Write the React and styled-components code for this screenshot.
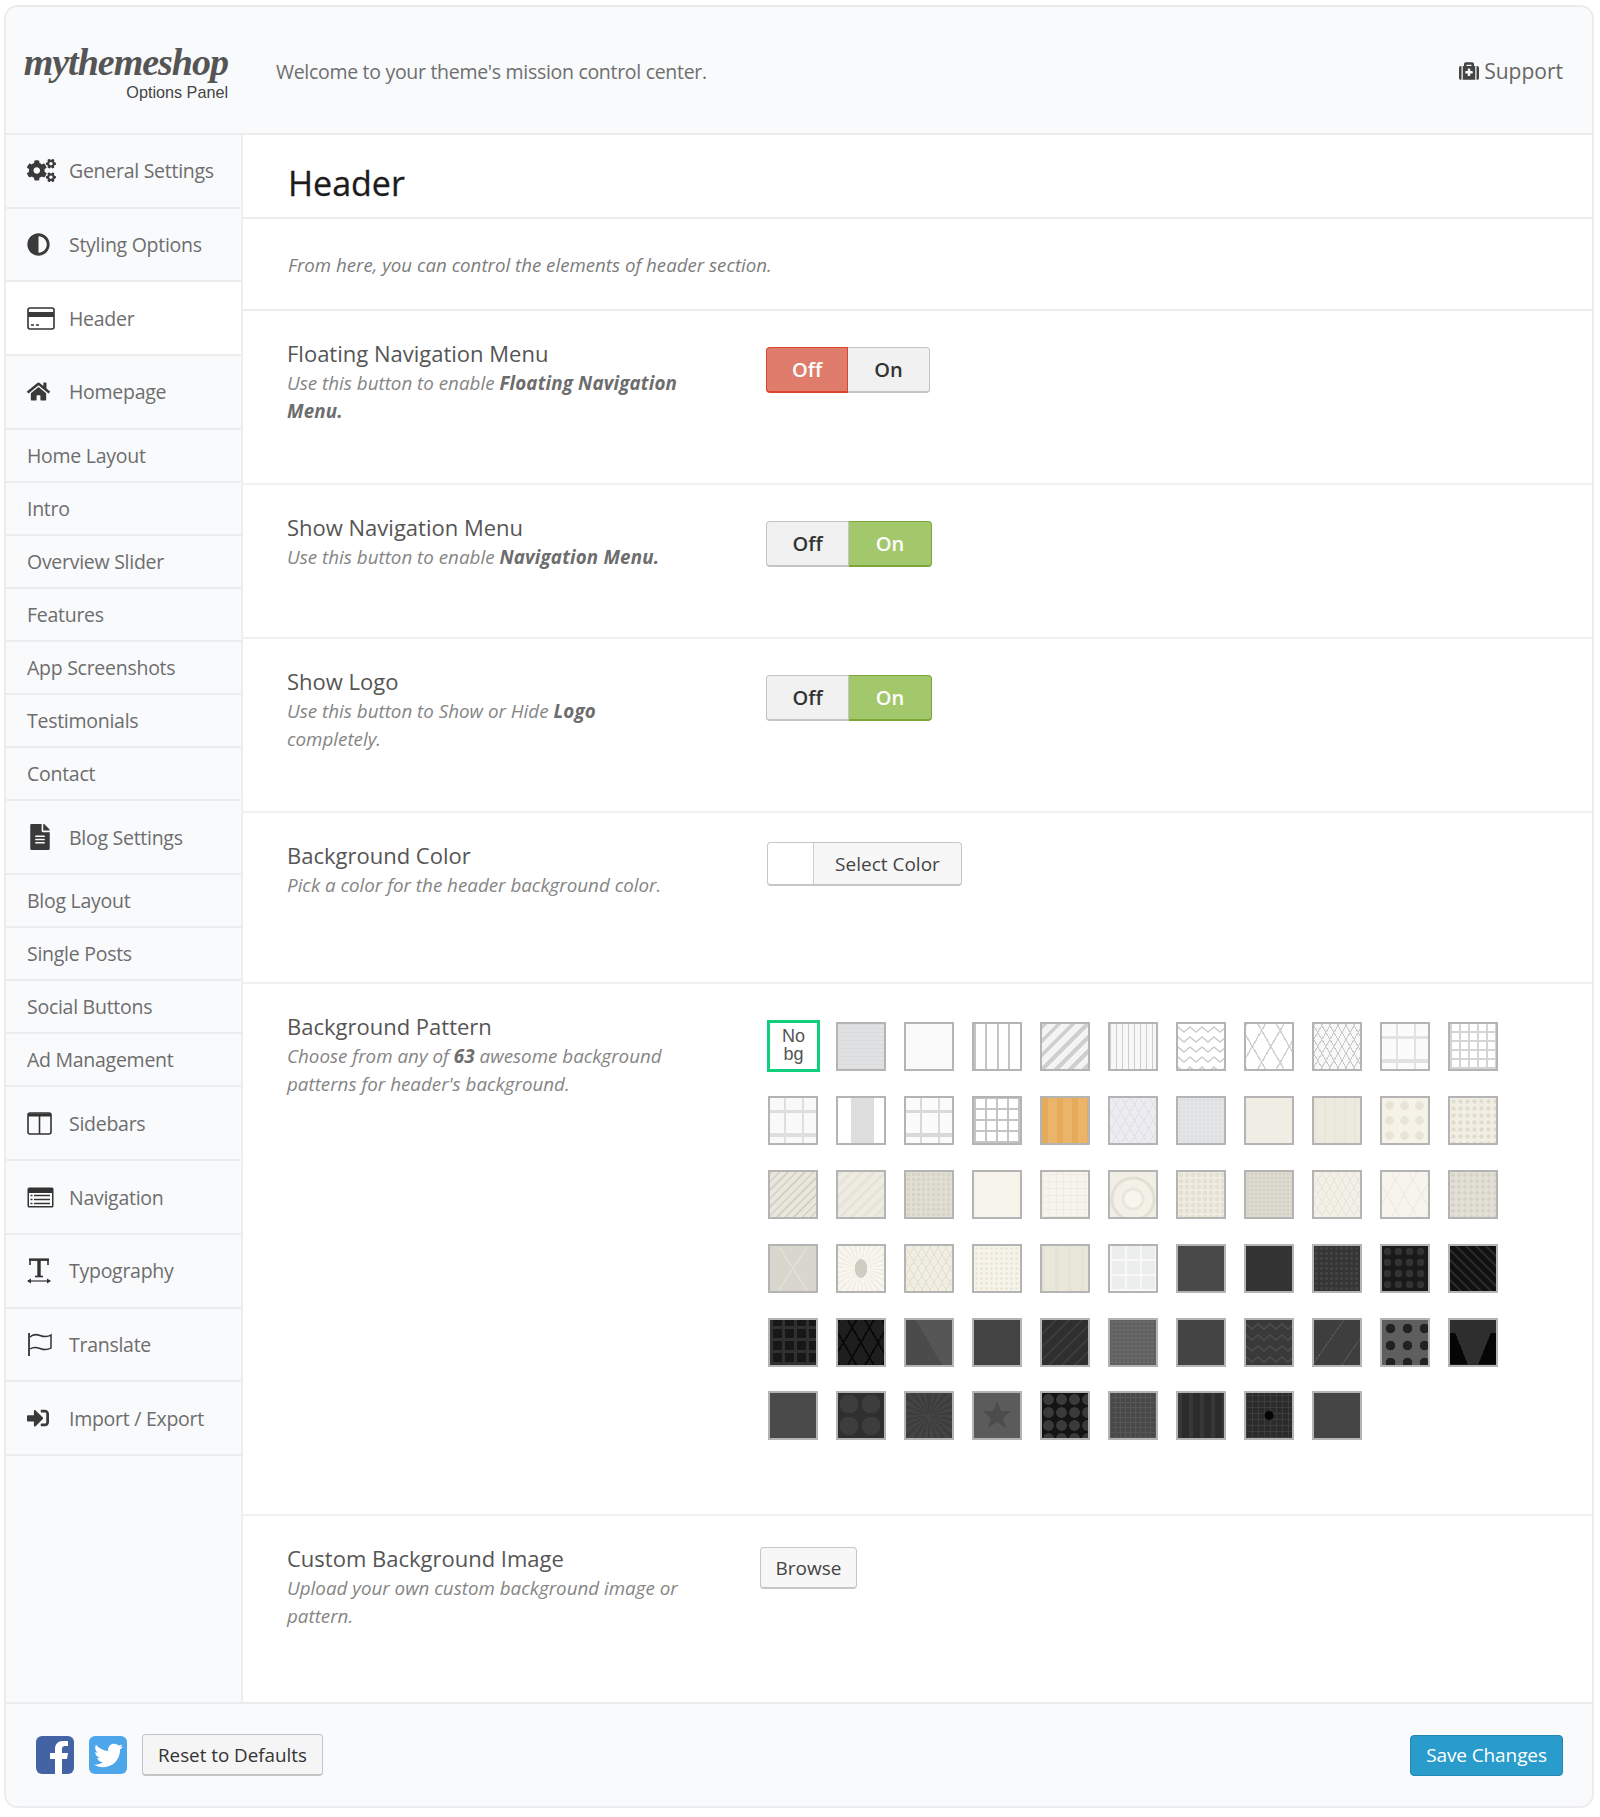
import React from "react"
import styled, { createGlobalStyle, css } from "styled-components"
import { FaCogs, FaAdjust, FaHome, FaFileAlt, FaSignInAlt, FaMedkit, FaTwitter } from "react-icons/fa"

const CardIcon = () => (
  <svg width="28" height="23" viewBox="0 0 28 23">
    <rect x="1" y="1" width="26" height="21" rx="2" fill="#fff" stroke="#333" strokeWidth="1.6" />
    <rect x="1" y="5" width="26" height="5" fill="#3a3a3a" />
    <path d="M4 18h3M9 18h3" stroke="#333" strokeWidth="1.5" />
  </svg>
)

const ColumnsIcon = () => (
  <svg width="25" height="23" viewBox="0 0 25 23">
    <rect x="1" y="1" width="23" height="21" rx="2" fill="none" stroke="#333" strokeWidth="1.6" />
    <path d="M1 3h23" stroke="#333" strokeWidth="3" />
    <path d="M12.5 2v20" stroke="#333" strokeWidth="1.6" />
  </svg>
)

const ListIcon = () => (
  <svg width="27" height="21" viewBox="0 0 27 21">
    <rect x="0.5" y="0.5" width="26" height="20" rx="1.5" fill="#333" />
    <rect x="2" y="6" width="23" height="13" fill="#fff" />
    <path d="M7 8.5h16M7 12.5h16M7 16.500h16" stroke="#333" strokeWidth="1.6" />
    <path d="M3.500 8.500h2M3.500 12.500h2M3.500 16.500h2" stroke="#333" strokeWidth="1.6" />
  </svg>
)

const TypeIcon = () => (
  <svg width="24" height="26" viewBox="0 0 24 26">
    <path d="M3 7V2h18v5M3 2v5M21 2v5" fill="none" stroke="#333" strokeWidth="1.600" />
    <path d="M2 1.500h20" stroke="#333" strokeWidth="2.200" />
    <path d="M12 2v16" stroke="#333" strokeWidth="3.400" />
    <path d="M8 18.500h8" stroke="#333" strokeWidth="1.600" />
    <path d="M1 23h22" stroke="#333" strokeWidth="1.200" />
    <path d="M0 23l4-2.600v5.200zM24 23l-4-2.600v5.200z" fill="#333" />
  </svg>
)

const FlagIcon = () => (
  <svg width="27" height="24" viewBox="0 0 27 24">
    <path d="M2 1v23" stroke="#333" strokeWidth="1.800" />
    <path d="M3 5c3-3 6-3 10-1.500s8 1.500 11-.5v13c-3 2-7 2-11 .500s-7-1.500-10 .500" fill="none" stroke="#333" strokeWidth="1.500" />
  </svg>
)

const FacebookIcon = () => (
  <svg width="38" height="38" viewBox="0 0 38 38">
    <rect width="38" height="38" rx="6" fill="#4463a5" />
    <path d="M26 38V23h5l1-6h-6v-4c0-2 1-3 3-3h3V5h-5c-5 0-8 3-8 8v4h-5v6h5v15z" fill="#fff" />
  </svg>
)

const Zigzag = ({ color, rows, amp = 5, step = 6 }) => (
  <svg width="46" height="45" viewBox="0 0 46 45">
    {rows.map((y) => {
      let d = `M-2 ${y}`
      for (let x = 0, up = true; x < 56; x += step, up = !up) d += `L${x} ${up ? y - amp : y}`
      return <path key={y} d={d} fill="none" stroke={color} strokeWidth="1.500" />
    })}
  </svg>
)

const StarTile = () => (
  <svg width="46" height="45" viewBox="0 0 46 45">
    <path d="M23 8l4 10h10l-8 7 3 10-9-6-9 6 3-10-8-7h10z" fill="#4c4c4c" />
  </svg>
)

const lines = (bg, c, angle, size, w) =>
  `repeating-linear-gradient(${angle}deg, ${c} 0 ${w}px, transparent ${w}px ${size}px), ${bg}`
const lattice = (bg, c, size, w) =>
  `repeating-linear-gradient(60deg, ${c} 0 ${w}px, transparent ${w}px ${size}px), repeating-linear-gradient(120deg, ${c} 0 ${w}px, transparent ${w}px ${size}px), ${bg}`
const grid = (bg, c, size, w) =>
  `repeating-linear-gradient(0deg, ${c} 0 ${w}px, transparent ${w}px ${size}px), repeating-linear-gradient(90deg, ${c} 0 ${w}px, transparent ${w}px ${size}px), ${bg}`
const dots = (bg, c, size, r) =>
  `radial-gradient(circle, ${c} ${r}px, transparent ${r + 0.6}px) 0 0 / ${size}px ${size}px, ${bg}`
const band = (bg, c, from, to) =>
  `linear-gradient(90deg, transparent ${from}px, ${c} ${from}px ${to}px, transparent ${to}px), ${bg}`
const bars = (bg, c) =>
  `linear-gradient(0deg, transparent 6px, ${c} 6px 10px, transparent 10px 30px, ${c} 30px 33px, transparent 33px), linear-gradient(90deg, transparent 14px, ${c} 14px 16px, transparent 16px 32px, ${c} 32px 34px, transparent 34px), ${bg}`

const swatches = [
  { bg: lines("#e0e1e3", "#d9dadc", 0, 4, 1) },
  { bg: "#fafafa" },
  { bg: lines("#fff", "#c4c4c4", 90, 11.500, 2) },
  { bg: lines("#f4f4f4", "#cfcfcf", 135, 10, 4) },
  { bg: lines("#f7f7f7", "#cdcdcd", 90, 6, 1.500) },
  { bg: "#fff", art: <Zigzag color="#cdcdcd" rows={[8, 18, 28, 38, 48]} /> },
  { bg: lattice("#fff", "#d2d2d2", 16, 1.500) },
  { bg: lattice("#f8f8f8", "#c9c9c9", 7, 1) },
  { bg: bars("#fbfbfb", "#e2e2e2") },
  { bg: grid("#fff", "#d4d4d4", 9, 2) },

  { bg: bars("#f9f9f9", "#dedede") },
  { bg: band("#fff", "#dedede", 13, 36) },
  { bg: bars("#fbfbfb", "#d9d9d9") },
  { bg: grid("#fff", "#c4c4c4", 11, 2) },
  { bg: lines("#eab56b", "rgba(220,150,60,.35)", 90, 15, 6) },
  { bg: lattice("#ececf1", "#e0e0e6", 8, 1) },
  { bg: dots("#e3e4e6", "#dddee0", 4, 1) },
  { bg: "#efede4" },
  { bg: lines("#ece9df", "#e8e5da", 90, 10, 2) },
  { bg: dots("#f5f2e8", "#e8e4d7", 15, 4) },
  { bg: dots("#f1eee4", "#e0dccd", 7, 1.800) },

  { bg: lines("#e9e7dd", "#d4d1c5", 135, 6, 1.500) },
  { bg: lines("#eeece2", "#e6e4d9", 135, 8, 3) },
  { bg: dots("#e1dfd4", "#d6d3c8", 5, 1.500) },
  { bg: "#f5f3ea" },
  { bg: grid("#f6f4ec", "#eeebe1", 7, 1) },
  { bg: "radial-gradient(circle at 50% 60%, #f7f5ec 0 8px, #e9e6dc 9px 11px, #f3f1e7 12px 19px, #e2dfd4 20px 22px, #f1efe5 23px)" },
  { bg: dots("#eeebe0", "#e3dfd2", 6, 2) },
  { bg: dots("#dfddd2", "#d4d1c6", 4, 1.200) },
  { bg: lattice("#f3f1e7", "#e8e5da", 7, 1) },
  { bg: lattice("#f6f4ec", "#edebe0", 15, 1) },
  { bg: dots("#e2e0d6", "#d5d2c7", 6, 1.500) },

  { bg: "linear-gradient(57deg, transparent 49%, #e3e1d8 49% 51%, transparent 51%), linear-gradient(123deg, transparent 49%, #e3e1d8 49% 51%, transparent 51%), #d9d7cd" },
  { bg: "radial-gradient(ellipse 6px 9px, #cfcdc2 0 100%, transparent 105%), repeating-conic-gradient(#f9f7ef 0 6deg, #f0eee5 6deg 12deg)" },
  { bg: lattice("#f0eee2", "#e3e0d2", 7, 1) },
  { bg: dots("#f6f3e8", "#e9e5d8", 5, 1) },
  { bg: lines("#e9e6da", "#e4e1d5", 90, 13, 3) },
  { bg: grid("#eceded", "#f8f8f8", 15, 2) },
  { bg: "#494949" },
  { bg: "#333" },
  { bg: dots("#353535", "#444", 5, 1.200) },
  { bg: dots("#1a1a1a", "#333", 11, 3.500) },
  { bg: lines("#111", "#2a2a2a", 45, 7, 2) },

  { bg: grid("#171717", "#303030", 12, 3) },
  { bg: lattice("#1e1e1e", "#0a0a0a", 15, 2) },
  { bg: "linear-gradient(60deg, #4b4b4b 50%, #565656 50%)" },
  { bg: "#434343" },
  { bg: lines("#2f2f2f", "#3b3b3b", 135, 9, 2) },
  { bg: dots("#616161", "#6c6c6c", 4, 1) },
  { bg: "#444" },
  { bg: "#3a3a3a", art: <Zigzag color="#4e4e4e" rows={[9, 20, 31, 42]} /> },
  { bg: lines("#3e3e3e", "#575757", 125, 24, 1) },
  { bg: dots("#5e5e5e", "#222", 17, 4.500) },
  { bg: "linear-gradient(68deg, #050505 50%, transparent 50%) left bottom / 50% 70% no-repeat, linear-gradient(-68deg, #050505 50%, transparent 50%) right bottom / 50% 70% no-repeat, #2e2e2e" },

  { bg: "#4a4a4a" },
  { bg: dots("#2f2f2f", "#3d3d3d", 22, 9) },
  { bg: "repeating-conic-gradient(#3d3d3d 0 8deg, #454545 8deg 16deg)" },
  { bg: "#5b5b5b", art: <StarTile /> },
  { bg: dots("#141414", "#3a3a3a", 13, 5) },
  { bg: grid("#494949", "#565656", 5, 1) },
  { bg: lines("#2c2c2c", "#383838", 90, 11, 4) },
  { bg: "radial-gradient(circle, #050505 0 4px, transparent 5px), " + grid("#2b2b2b", "#3d3d3d", 6, 1) },
  { bg: "#454545" },
]

const menu = [
  { label: "General Settings", icon: <FaCogs size={29} /> },
  { label: "Styling Options", icon: <FaAdjust size={23} /> },
  { label: "Header", icon: <CardIcon />, active: true },
  { label: "Homepage", icon: <FaHome size={23} /> },
  { label: "Home Layout" }, { label: "Intro" }, { label: "Overview Slider" }, { label: "Features" },
  { label: "App Screenshots" }, { label: "Testimonials" }, { label: "Contact" },
  { label: "Blog Settings", icon: <FaFileAlt size={26} /> },
  { label: "Blog Layout" }, { label: "Single Posts" }, { label: "Social Buttons" }, { label: "Ad Management" },
  { label: "Sidebars", icon: <ColumnsIcon /> },
  { label: "Navigation", icon: <ListIcon /> },
  { label: "Typography", icon: <TypeIcon /> },
  { label: "Translate", icon: <FlagIcon /> },
  { label: "Import / Export", icon: <FaSignInAlt size={22} /> },
]

const Toggle = ({ on }) => (
  <ToggleWrap>
    <ToggleSide $wide={on} $tone={on ? null : "off"}>Off</ToggleSide>
    <ToggleSide $wide={on} $tone={on ? "on" : null}>On</ToggleSide>
  </ToggleWrap>
)

const App = () => {
  return (
    <>
      <Global />
      <Panel>
        <Top>
          <Logo>
            <LogoName>mythemeshop</LogoName>
            <LogoSub>Options Panel</LogoSub>
          </Logo>
          <Welcome>Welcome to your theme's mission control center.</Welcome>
          <Support><FaMedkit size={20} />Support</Support>
        </Top>
        <Body>
          <Sidebar>
            {menu.map((m) => (
              <MenuItem key={m.label} $big={!!m.icon} $active={m.active}>
                {m.icon && <MenuIcon>{m.icon}</MenuIcon>}
                {m.label}
              </MenuItem>
            ))}
          </Sidebar>
          <Main>
            <PageTitle>Header</PageTitle>
            <Intro>From here, you can control the elements of header section.</Intro>
            <Row $height={174}>
              <Info>
                <Label>Floating Navigation Menu</Label>
                <Desc>Use this button to enable <b>Floating Navigation Menu.</b></Desc>
              </Info>
              <Toggle />
            </Row>
            <Row $height={154}>
              <Info>
                <Label>Show Navigation Menu</Label>
                <Desc>Use this button to enable <b>Navigation Menu.</b></Desc>
              </Info>
              <Toggle on />
            </Row>
            <Row $height={174}>
              <Info>
                <Label>Show Logo</Label>
                <Desc>Use this button to Show or Hide <b>Logo</b> completely.</Desc>
              </Info>
              <Toggle on />
            </Row>
            <Row $height={171}>
              <Info>
                <Label>Background Color</Label>
                <Desc>Pick a color for the header background color.</Desc>
              </Info>
              <ColorPicker>
                <ColorChip />
                <ColorText>Select Color</ColorText>
              </ColorPicker>
            </Row>
            <Row $height={532}>
              <Info>
                <Label>Background Pattern</Label>
                <Desc>Choose from any of <b>63</b> awesome background patterns for header's background.</Desc>
              </Info>
              <Patterns>
                <Swatch $selected>No<br />bg</Swatch>
                {swatches.map((s, i) => (
                  <Swatch key={i} $bg={s.bg}>{s.art}</Swatch>
                ))}
              </Patterns>
            </Row>
            <Row $height={187} $last>
              <Info>
                <Label>Custom Background Image</Label>
                <Desc>Upload your own custom background image or pattern.</Desc>
              </Info>
              <BrowseButton>Browse</BrowseButton>
            </Row>
          </Main>
        </Body>
        <Bottom>
          <Social>
            <FacebookIcon />
            <TwitterBox><FaTwitter size={29} /></TwitterBox>
            <ResetButton>Reset to Defaults</ResetButton>
          </Social>
          <SaveButton>Save Changes</SaveButton>
        </Bottom>
      </Panel>
    </>
  )
}

export default App

const Global = createGlobalStyle`
html, body {
  margin: 0;
  padding: 0;
  background: #fff;
}
body {
  font-family: "Open Sans", "Liberation Sans", sans-serif;
}
* {
  box-sizing: border-box;
}
`

const Panel = styled.div`
display: flex;
flex-direction: column;
width: 1590px;
height: 1803px;
margin: 5px 0 0 4px;
background: #fff;
border: 2px solid #ececec;
border-radius: 14px;
overflow: hidden;
`

const Top = styled.header`
display: flex;
align-items: center;
flex-shrink: 0;
height: 128px;
padding: 2px 29px 0 18px;
background: #f9fafc;
border-bottom: 2px solid #ececec;
`

const Logo = styled.div`
display: flex;
flex-direction: column;
align-items: flex-end;
width: 204px;
margin-top: 3px;
flex-shrink: 0;
`

const LogoName = styled.div`
font-family: "Liberation Serif", serif;
font-style: italic;
font-weight: bold;
font-size: 38px;
line-height: 38px;
letter-spacing: -1px;
color: #555;
`

const LogoSub = styled.div`
font-family: "Liberation Sans", sans-serif;
font-size: 16.2px;
line-height: 20px;
margin-top: 1px;
color: #444;
`

const Welcome = styled.div`
margin-left: 48px;
font-size: 19.5px;
letter-spacing: -0.3px;
color: #6e6e6e;
`

const Support = styled.div`
display: flex;
align-items: center;
gap: 5px;
margin-left: auto;
font-size: 21px;
color: #666;

svg {
  color: #444;
}
`

const Body = styled.div`
display: flex;
flex: 1;
min-height: 0;
`

const Sidebar = styled.nav`
width: 237px;
flex-shrink: 0;
background: #f9fafc;
border-right: 2px solid #eee;
`

const MenuItem = styled.div`
display: flex;
align-items: center;
height: ${(p) => (p.$big ? "73.7px" : "53.1px")};
padding-left: 21px;
font-size: 19.5px;
letter-spacing: -0.27px;
color: #6d6d6d;
border-bottom: 2px solid #ececec;
background: ${(p) => (p.$active ? "#fff" : "transparent")};
`

const MenuIcon = styled.span`
display: flex;
align-items: center;
width: 42px;
color: #3a3a3a;
`

const Main = styled.main`
flex: 1;
min-width: 0;
`

const PageTitle = styled.h1`
margin: 0;
height: 84px;
padding: 25px 0 0 45px;
font-size: 34px;
line-height: 46px;
font-weight: 500;
-webkit-text-stroke: 0.3px #1b1b1b;
color: #1b1b1b;
border-bottom: 2px solid #ececec;
`

const Intro = styled.p`
margin: 0;
height: 92px;
padding: 33px 0 0 45px;
font-size: 18.7px;
line-height: 26px;
font-style: italic;
color: #7d7d7d;
border-bottom: 2px solid #ececec;
`

const Row = styled.section`
display: flex;
height: ${(p) => p.$height}px;
padding: 28px 0 0 44px;
border-bottom: ${(p) => (p.$last ? "none" : "2px solid #f0f0f0")};
`

const Info = styled.div`
width: 479px;
flex-shrink: 0;
`

const Label = styled.h3`
margin: 0 0 1px;
font-size: 22px;
line-height: 29px;
font-weight: 400;
color: #555;
`

const Desc = styled.p`
margin: 0;
width: 403px;
font-size: 18.8px;
line-height: 28px;
font-style: italic;
color: #858585;

b {
  font-weight: 700;
  letter-spacing: 0.15px;
  color: #6d6d6d;
}
`

const ToggleWrap = styled.div`
display: flex;
height: 46px;
margin-top: 8px;
`

const ToggleSide = styled.div`
display: flex;
align-items: center;
justify-content: center;
width: ${(p) => (p.$wide ? "83px" : "82px")};
font-size: 20px;
font-weight: 600;
border-style: solid;
border-width: 1px 1px 2px 1px;
border-color: #c4c4c4;
background: #f1f1f1;
color: #333;

&:first-child {
  border-radius: 4px 0 0 4px;
}
&:last-child {
  border-radius: 0 4px 4px 0;
  border-left: none;
}

${(p) => p.$tone === "off" && css`
  background: #e07c6b;
  border-color: #d9452b;
  color: #fff;
`}
${(p) => p.$tone === "on" && css`
  background: #a3c86c;
  border-color: #7ba63a;
  color: #fff;
`}
`

const ColorPicker = styled.div`
display: flex;
width: 195px;
height: 44px;
margin: 1px 0 0 1px;
border: 1px solid #c6c6c6;
border-bottom-width: 2px;
border-radius: 4px;
background: #f7f7f7;
`

const ColorChip = styled.div`
width: 46px;
background: #fff;
border-right: 1px solid #cfcfcf;
border-radius: 4px 0 0 4px;
`

const ColorText = styled.div`
flex: 1;
display: flex;
align-items: center;
justify-content: center;
font-size: 19px;
color: #444;
`

const Patterns = styled.div`
display: grid;
grid-template-columns: repeat(11, 50px);
grid-auto-rows: 49px;
column-gap: 18px;
row-gap: 24.9px;
margin: 10px 0 0 2px;
align-self: flex-start;
`

const Swatch = styled.div`
width: 50px;
height: 49px;
border: 2px solid #b4b4b4;
background: ${(p) => p.$bg || "#fff"};
overflow: hidden;

svg {
  display: block;
}

${(p) => p.$selected && css`
  width: 53px;
  height: 52px;
  margin: -2px 0 0 -1px;
  border: 3px solid #0fcf7c;
  font-family: "Liberation Sans", sans-serif;
  font-size: 18px;
  line-height: 18px;
  text-align: center;
  padding-top: 4px;
  color: #555;
`}
`

const BrowseButton = styled.div`
display: flex;
align-items: center;
justify-content: center;
width: 97px;
height: 42px;
margin: 3px 0 0 -6px;
font-size: 19px;
color: #444;
background: #f7f7f7;
border: 1px solid #c6c6c6;
border-bottom-width: 2px;
border-radius: 4px;
`

const Bottom = styled.footer`
display: flex;
align-items: center;
justify-content: space-between;
flex-shrink: 0;
height: 104px;
padding: 0 29px 0 30px;
background: #f9fafc;
border-top: 2px solid #ececec;
`

const Social = styled.div`
display: flex;
align-items: center;
gap: 15px;
`

const TwitterBox = styled.div`
display: flex;
align-items: center;
justify-content: center;
width: 38px;
height: 38px;
border-radius: 6px;
background: #4ea6ea;
color: #fff;
`

const ResetButton = styled.div`
display: flex;
align-items: center;
justify-content: center;
width: 181px;
height: 42px;
font-size: 18.8px;
color: #333;
background: #f5f5f5;
border: 1px solid #c4c4c4;
border-bottom-width: 2px;
border-radius: 4px;
`

const SaveButton = styled.div`
display: flex;
align-items: center;
justify-content: center;
width: 153px;
height: 41px;
font-size: 19px;
letter-spacing: -0.1px;
color: #fff;
background: #2a9ccb;
border: 1px solid #1f87b3;
border-radius: 4px;
`
